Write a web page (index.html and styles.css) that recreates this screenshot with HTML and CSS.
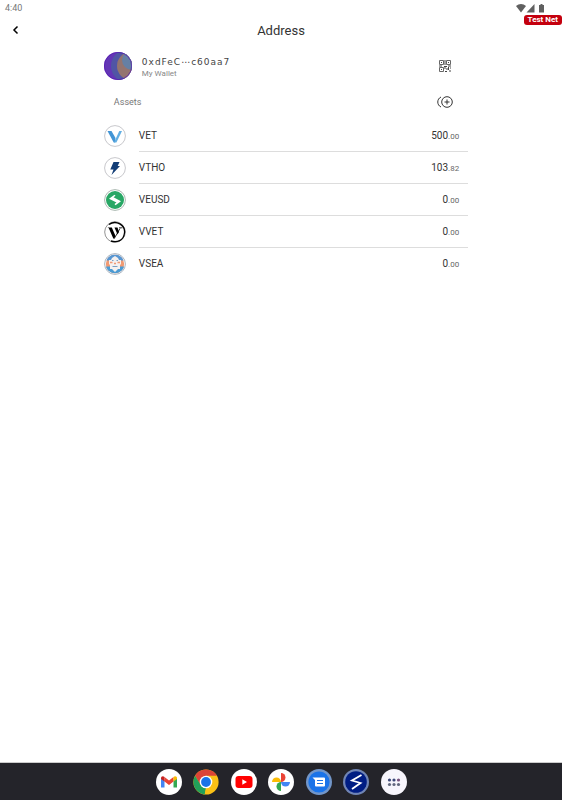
FILE: index.html
```html
<!DOCTYPE html>
<html lang="en">
<head>
<meta charset="utf-8">
<meta name="viewport" content="width=device-width, initial-scale=1">
<title>Address</title>
<link rel="stylesheet" href="styles.css">
</head>
<body>
<div class="status">
  <span>4:40</span>
  <svg class="status-icons" viewBox="0 0 30 10" aria-hidden="true">
    <path d="M0 3C3 .3 7 .3 10 3L5 9.500Z"/><path d="M18.500 1v8.500h-8Z"/><path d="M23 2h1.500V1h2v1H28v7.500h-5Z"/>
  </svg>
</div>
<span class="badge">Test Net</span>
<header class="bar">
  <button class="icon-btn back" type="button" aria-label="Back">
    <svg width="8" height="10" viewBox="0 0 8 10" fill="none" stroke="#000" stroke-width="1.500"><path d="M5.500 1.500 2 5l3.500 3.500"/></svg>
  </button>
  <h1>Address</h1>
</header>
<main class="content">
  <section class="profile">
    <svg class="avatar" viewBox="0 0 28 28" aria-hidden="true">
      <defs><clipPath id="face"><circle cx="14" cy="14" r="14"/></clipPath></defs>
      <g clip-path="url(#face)">
        <rect width="28" height="28" fill="#6336b5"/>
        <circle cx="24" cy="14" r="17" fill="#5055a5"/>
        <circle cx="27" cy="14" r="14" fill="#94746f"/>
        <circle cx="28" cy="8" r="10" fill="#6580a4"/>
      </g>
      <circle cx="14" cy="14" r="13.700" fill="none" stroke="#5010b0" stroke-width=".6"/>
    </svg>
    <div class="identity">
      <span class="hash">0xdFeC⋯c60aa7</span>
      <span class="name">My Wallet</span>
    </div>
    <button class="icon-btn" type="button" aria-label="Show QR code">
      <svg width="12" height="12" viewBox="0 0 12 12" fill="none" stroke="#666">
        <path d="M.5.5h4v4h-4ZM7.500.5h4v4h-4ZM.5 7.500h4v4h-4Z"/>
        <path stroke="#444" d="M2 2.500h1M9 2.500h1M2 9.500h1M6 0v5M5 6.500h3M0 6h3M9 6h3M6 7v2M7 9h2M9.500 7v3M6 11.500h2M10 11h2M11 8h1"/>
      </svg>
    </button>
  </section>
  <section class="assets-head">
    <h2>Assets</h2>
    <button class="icon-btn" type="button" aria-label="Add token">
      <svg width="16" height="12" viewBox="0 0 16 12" fill="none" stroke="#333"><circle cx="10" cy="6" r="5.300"/><path d="M4 1C-.3 3-.3 9 4 11M7.500 6h5M10 3.500v5"/></svg>
    </button>
  </section>
  <ul class="assets">
    <li>
      <svg class="token" viewBox="0 0 22 22" aria-hidden="true"><circle cx="11" cy="11" r="10.400" fill="#fff" stroke="#c8c8cc"/><path d="M3.500 6H7.500L11.500 13l-.6 4.500H9.700Z" fill="#4295d5"/><path d="M10 17.500 15.300 6H18l-5.600 11.500Z" fill="#62afe3"/></svg>
      <div class="row"><span>VET</span><span class="amount">500<small>.00</small></span></div>
    </li>
    <li>
      <svg class="token" viewBox="0 0 22 22" aria-hidden="true"><circle cx="11" cy="11" r="10.400" fill="#fff" stroke="#c8c8cc"/><path d="M9.500 5h6L13.700 9h2.300L7.500 18l2-5.500H6.300Z" fill="#123d76"/></svg>
      <div class="row"><span>VTHO</span><span class="amount">103<small>.82</small></span></div>
    </li>
    <li>
      <svg class="token" viewBox="0 0 22 22" aria-hidden="true"><circle cx="11" cy="11" r="10.400" fill="#fff" stroke="#aab8b0"/><circle cx="11" cy="11" r="9" fill="#28a765"/><path d="M5 9.800 10.500 5.800l1 1L9.500 8.300 17 12.300l-5.500 4-1-1.200 2-1.600Z" fill="#fff"/></svg>
      <div class="row"><span>VEUSD</span><span class="amount">0<small>.00</small></span></div>
    </li>
    <li>
      <svg class="token" viewBox="0 0 22 22" aria-hidden="true"><circle cx="11" cy="11" r="10.300" fill="#fff" stroke="#777" stroke-width=".8"/><path d="M5 3.500C12-1.500 21.500 4 20.500 12S13 21.500 7 20" fill="none" stroke="#000" stroke-width="1.300"/><path d="M3.500 6.500H7.800L11.300 14.500 10.500 17.500H9.300L4.800 7.200Z"/><path d="M10.500 6.500h3l1.500 4.500-1.500 2.500Z"/><path d="M10.300 17.500 16 7.500M15 6.800h3.500" fill="none" stroke="#000" stroke-width=".8"/></svg>
      <div class="row"><span>VVET</span><span class="amount">0<small>.00</small></span></div>
    </li>
    <li>
      <svg class="token" viewBox="0 0 22 22" aria-hidden="true"><circle cx="11" cy="11" r="10.400" fill="#fff" stroke="#a9b4bf"/><circle cx="11" cy="11" r="9.200" fill="#f19a72"/><path d="M2.500 7.500C4 3 8 1.800 11 1.800S18 3 19.500 7.500Z" fill="#5796d2"/><path d="M2 13.500h18c-1 4-5 6.700-9 6.700S3 17.500 2 13.500Z" fill="#4b9bd4"/><path d="M8 5 11 3l3 2 1 2h2v4l-1 1v4h-2l-3 3-3-3H6v-4l-1-1V7h2Z" fill="#f4f0ef"/><path d="M6 9.500h2.500M13.500 9.500H16M10 10.500h2" stroke="#ef9875" stroke-width="1.300"/><path d="M8 7.500h1.500M12.500 7.500H14M8.500 13.500h5" stroke="#789fc4"/></svg>
      <div class="row"><span>VSEA</span><span class="amount">0<small>.00</small></span></div>
    </li>
  </ul>
</main>
<nav class="dock" aria-label="Apps">
  <div class="apps">
  <button class="app" type="button" aria-label="Gmail"><svg viewBox="0 0 26 26"><circle cx="13" cy="13" r="13" fill="#fff"/><path d="M5 8.500v10h3.500V11Z" fill="#4285f4"/><path d="M17.500 11v7.500H21v-10Z" fill="#34a853"/><path d="M8.500 8v4.500L13 16l4.500-3.500V8L13 11.500Z" fill="#ea4335"/><path d="M5 9.500C5 7.200 7 6.800 8.500 8v4.500L5 10Z" fill="#c5221f"/><path d="M21 9.500c0-2.300-2-2.700-3.500-1.500v4.500L21 10Z" fill="#fbbc04"/></svg></button>
  <button class="app" type="button" aria-label="Chrome"><svg viewBox="0 0 26 26"><circle cx="13" cy="13" r="12.600" fill="#fbc116"/><path d="M2.100 6.700A12.600 12.600 0 0 1 23.900 6.700H13L7.500 16Z" fill="#dc4437"/><path d="M2.100 6.700 7.700 16 13 19.200l-1.300 6.300A12.600 12.600 0 0 1 2.100 6.700Z" fill="#22a15a"/><path d="M11.700 25.500 18.500 16l-5.500 3Z" fill="#fbc116"/><circle cx="13" cy="13" r="6.300" fill="#fff"/><circle cx="13" cy="13" r="4.900" fill="#1a73e8"/></svg></button>
  <button class="app" type="button" aria-label="YouTube"><svg viewBox="0 0 26 26"><circle cx="13" cy="13" r="13" fill="#fff"/><rect x="4.500" y="7" width="17" height="12" rx="3" fill="#f00"/><path d="m11.300 10.300 4.700 2.700-4.700 2.700Z" fill="#fff"/></svg></button>
  <button class="app" type="button" aria-label="Photos"><svg viewBox="0 0 26 26"><circle cx="13" cy="13" r="13" fill="#fff"/><path d="M13 4a4.500 4.500 0 0 1 0 9Z" fill="#ea4335"/><path d="M22 13a4.500 4.500 0 0 1-9 0Z" fill="#4285f4"/><path d="M13 22a4.500 4.500 0 0 1 0-9Z" fill="#34a853"/><path d="M4 13a4.500 4.500 0 0 1 9 0Z" fill="#fbbc04"/></svg></button>
  <button class="app" type="button" aria-label="Messages"><svg viewBox="0 0 26 26"><circle cx="13" cy="13" r="13" fill="#7296c9"/><circle cx="13" cy="13" r="10.600" fill="#1a73e8"/><path d="M6.500 8.500h11.500q1 0 1 1v7q0 1-1 1H10q-1 0-1-1V11Z" fill="#fff"/><path d="M11 11.500h6M11 14.500h6" stroke="#1a73e8"/></svg></button>
  <button class="app" type="button" aria-label="Sync"><svg viewBox="0 0 26 26"><circle cx="13" cy="13" r="13" fill="#7085b5"/><circle cx="13" cy="13" r="10.800" fill="#001d83"/><path d="M18.500 6 9 11.500l8.500 2.500L9 20" fill="none" stroke="#fff" stroke-width="1.800"/></svg></button>
  <button class="app" type="button" aria-label="All apps"><svg viewBox="0 0 26 26"><circle cx="13" cy="13" r="13" fill="#f7f5fc"/><g fill="#3d4878"><circle cx="8.500" cy="11" r="1.600"/><circle cx="13" cy="11" r="1.600"/><circle cx="17.500" cy="11" r="1.600" fill="#77517d"/><circle cx="8.500" cy="15.500" r="1.600" fill="#62677e"/><circle cx="13" cy="15.500" r="1.600" fill="#62677e"/><circle cx="17.500" cy="15.500" r="1.600" fill="#62677e"/></g></svg></button>
  </div>
</nav>
</body>
</html>
```
FILE: styles.css
```css
* { box-sizing: border-box; }

body {
  margin: 0;
  min-height: 100vh;
  display: flex;
  flex-direction: column;
  background: #fff;
  color: #333;
  font-family: Roboto, "Liberation Sans", sans-serif;
  font-size: 10px;
}

button {
  padding: 0;
  border: 0;
  background: none;
  cursor: pointer;
}

svg { display: block; }

.status {
  height: 16px;
  padding: 0 16px 0 5px;
  display: flex;
  justify-content: space-between;
  align-items: center;
  color: #777;
  font-size: 9px;
}

.status-icons {
  width: 30px;
  height: 10px;
  fill: #606060;
}

.badge {
  position: absolute;
  top: 15px;
  right: 0;
  padding: 0 4px;
  border-radius: 3px;
  background: #c4000e;
  color: #fff;
  font-size: 8px;
  font-weight: 700;
  line-height: 10px;
}

.bar {
  height: 28px;
  display: grid;
  grid-template-columns: 32px 1fr 32px;
  align-items: center;
}

.bar h1 {
  margin: 0;
  text-align: center;
  font-size: 13px;
  font-weight: 400;
}

.icon-btn {
  width: 28px;
  height: 28px;
  display: grid;
  place-items: center;
}

.back { width: 32px; }

.content {
  width: 66.6%;
  margin: 0 auto;
  padding: 8px 0 0 10px;
  flex: 1;
}

.profile {
  padding-right: 9px;
  display: flex;
  align-items: center;
  gap: 10px;
}

.avatar {
  width: 28px;
  height: 28px;
}

.identity {
  flex: 1;
  padding-top: 3px;
  display: flex;
  flex-direction: column;
}

.hash {
  color: #444;
  font-family: "DejaVu Sans", sans-serif;
  font-size: 9px;
  letter-spacing: 1px;
  line-height: 12px;
}

.name {
  color: #888;
  font-size: 8px;
  line-height: 12px;
}

.assets-head {
  height: 28px;
  margin: 8px 0 4px;
  padding: 0 9px 0 10px;
  display: flex;
  justify-content: space-between;
  align-items: center;
}

.assets-head h2 {
  margin: 0;
  color: #777;
  font-size: 9px;
  font-weight: 400;
}

.assets {
  margin: 0;
  padding: 0;
  list-style: none;
}

.assets li {
  display: flex;
  align-items: center;
  gap: 13px;
}

.token {
  width: 22px;
  height: 22px;
}

.row {
  flex: 1;
  height: 32px;
  padding-right: 9px;
  display: flex;
  justify-content: space-between;
  align-items: center;
  border-bottom: 1px solid #ddd;
}

.assets li:last-child .row { border-bottom-color: transparent; }

.amount small {
  color: #666;
  font-size: 8px;
}

.dock {
  height: 38px;
  display: flex;
  justify-content: center;
  align-items: center;
  border-top: 1px solid #ccc;
  background: #24242a;
}

.apps {
  width: 100%;
  max-width: 251px;
  display: flex;
  justify-content: space-between;
}

.app {
  width: 26px;
  height: 26px;
}
```
